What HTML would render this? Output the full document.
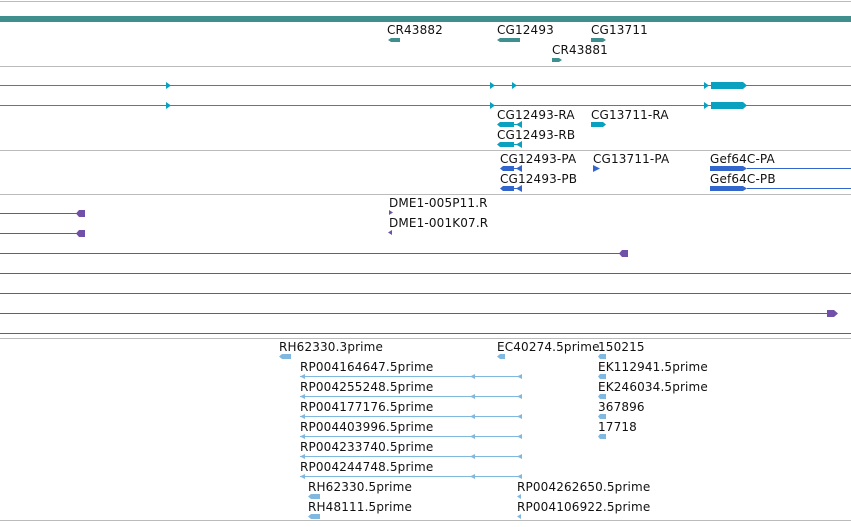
<!DOCTYPE html>
<html><head><meta charset="utf-8"><style>
html,body{margin:0;padding:0;background:#fff;}
svg text{font-family:"DejaVu Sans","Liberation Sans",sans-serif;font-size:12px;fill:#111;letter-spacing:0.15px;}
</style></head><body>
<svg width="851" height="522" xmlns="http://www.w3.org/2000/svg">
<g stroke="#bbb" stroke-width="1">
<line x1="0" y1="1.5" x2="851" y2="1.5"/><line x1="0" y1="66.5" x2="851" y2="66.5"/>
<line x1="0" y1="150.5" x2="851" y2="150.5"/><line x1="0" y1="194.5" x2="851" y2="194.5"/>
<line x1="0" y1="338.5" x2="851" y2="338.5"/><line x1="0" y1="520.5" x2="851" y2="520.5"/>
</g>
<rect x="0" y="16" width="851" height="6" fill="#3f8f8f"/>
<g fill="#3f8f8f">
<polygon points="391,38 400,38 400,42 391,42 388,40"/>
<polygon points="500,38 520,38 520,42 500,42 497,40"/>
<polygon points="591,38 603,38 606,40 603,42 591,42"/>
<polygon points="552,58 559,58 562,60 559,62 552,62"/>
</g>
<text x="387" y="34">CR43882</text><text x="497" y="34">CG12493</text><text x="591" y="34">CG13711</text><text x="552" y="54">CR43881</text>
<g stroke="#1497b5" stroke-width="1"><line x1="0" y1="85.5" x2="851" y2="85.5"/><line x1="0" y1="105.5" x2="851" y2="105.5"/></g>
<g fill="#0aa0bf">
<polygon points="166,82 171,85.5 166,89"/><polygon points="490,82 495,85.5 490,89"/><polygon points="512,82 517,85.5 512,89"/><polygon points="704,82 709,85.5 704,89"/>
<polygon points="711,82 743,82 747,85.5 743,89 711,89"/>
<polygon points="166,102 171,105.5 166,109"/><polygon points="490,102 495,105.5 490,109"/><polygon points="704,102 709,105.5 704,109"/>
<polygon points="711,102 743,102 747,105.5 743,109 711,109"/>
<polygon points="500,122 514,122 514,127 500,127 497,124.5"/><polygon points="516,124.5 522,121 522,128"/><rect x="513" y="124" width="4" height="1"/>
<polygon points="591,122 603,122 606,124.5 603,127 591,127"/>
<polygon points="500,142 514,142 514,147 500,147 497,144.5"/><polygon points="516,144.5 522,141 522,148"/><rect x="513" y="144" width="4" height="1"/>
</g>
<text x="497" y="119">CG12493-RA</text><text x="591" y="119">CG13711-RA</text><text x="497" y="139">CG12493-RB</text>
<g fill="#3366cc">
<polygon points="503,166 514,166 514,171 503,171 500,168.5"/><polygon points="516,168.5 522,165 522,172"/><rect x="513" y="168" width="4" height="1"/>
<polygon points="503,186 514,186 514,191 503,191 500,188.5"/><polygon points="516,188.5 522,185 522,192"/><rect x="513" y="188" width="4" height="1"/>
<polygon points="593,165 600,168.5 593,172"/>
<polygon points="710,166 743,166 747,168.5 743,171 710,171"/><rect x="747" y="168" width="104" height="1"/>
<polygon points="710,186 743,186 747,188.5 743,191 710,191"/><rect x="747" y="188" width="104" height="1"/>
</g>
<text x="500" y="163">CG12493-PA</text><text x="593" y="163">CG13711-PA</text><text x="710" y="163">Gef64C-PA</text>
<text x="500" y="183">CG12493-PB</text><text x="710" y="183">Gef64C-PB</text>
<g stroke="#6a55a0" stroke-width="1">
<line x1="0" y1="213.5" x2="80" y2="213.5"/><line x1="0" y1="233.5" x2="80" y2="233.5"/>
<line x1="0" y1="253.5" x2="622" y2="253.5"/><line x1="0" y1="273.5" x2="851" y2="273.5"/>
<line x1="0" y1="293.5" x2="851" y2="293.5"/><line x1="0" y1="313.5" x2="830" y2="313.5"/>
<line x1="0" y1="333.5" x2="851" y2="333.5"/>
</g>
<g fill="#7050a8">
<polygon points="79,210 85,210 85,217 79,217 76,213.5"/><polygon points="79,230 85,230 85,237 79,237 76,233.5"/>
<polygon points="622,250 628,250 628,257 622,257 619,253.5"/>
<polygon points="827,310 834,310 838,313.5 834,317 827,317"/>
<polygon points="389,210 393,212.5 389,215"/><polygon points="392,230 388,232.5 392,235"/>
</g>
<text x="389" y="207">DME1-005P11.R</text><text x="389" y="227">DME1-001K07.R</text>
<g fill="#80b8e0">
<polygon points="282,354 291,354 291,359 282,359 279,356.5"/>
<polygon points="500,354 505,354 505,359 500,359 497,356.5"/>
<polygon points="600,354 606,354 606,359 600,359 598,356.5"/>
<polygon points="600,374 606,374 606,379 600,379 598,376.5"/>
<polygon points="600,394 606,394 606,399 600,399 598,396.5"/>
<polygon points="600,414 606,414 606,419 600,419 598,416.5"/>
<polygon points="600,434 606,434 606,439 600,439 598,436.5"/>
<polygon points="311,494 320,494 320,499 311,499 308,496.5"/>
<polygon points="311,514 320,514 320,519 311,519 308,516.5"/>
<polygon points="517,496.5 521,494 521,499"/><polygon points="517,516.5 521,514 521,519"/>
<rect x="300" y="376" width="221" height="1"/><polygon points="300,376.5 305,374 305,379"/><polygon points="470,376.5 475,374 475,379"/><polygon points="517,376.5 522,374 522,379"/>
<rect x="300" y="396" width="221" height="1"/><polygon points="300,396.5 305,394 305,399"/><polygon points="470,396.5 475,394 475,399"/><polygon points="517,396.5 522,394 522,399"/>
<rect x="300" y="416" width="221" height="1"/><polygon points="300,416.5 305,414 305,419"/><polygon points="470,416.5 475,414 475,419"/><polygon points="517,416.5 522,414 522,419"/>
<rect x="300" y="436" width="221" height="1"/><polygon points="300,436.5 305,434 305,439"/><polygon points="470,436.5 475,434 475,439"/><polygon points="517,436.5 522,434 522,439"/>
<rect x="300" y="456" width="221" height="1"/><polygon points="300,456.5 305,454 305,459"/><polygon points="470,456.5 475,454 475,459"/><polygon points="517,456.5 522,454 522,459"/>
<rect x="300" y="476" width="221" height="1"/><polygon points="300,476.5 305,474 305,479"/><polygon points="470,476.5 475,474 475,479"/><polygon points="517,476.5 522,474 522,479"/>
</g>
<text x="279" y="351">RH62330.3prime</text><text x="497" y="351">EC40274.5prime</text><text x="598" y="351">150215</text>
<text x="300" y="371">RP004164647.5prime</text><text x="598" y="371">EK112941.5prime</text>
<text x="300" y="391">RP004255248.5prime</text><text x="598" y="391">EK246034.5prime</text>
<text x="300" y="411">RP004177176.5prime</text><text x="598" y="411">367896</text>
<text x="300" y="431">RP004403996.5prime</text><text x="598" y="431">17718</text>
<text x="300" y="451">RP004233740.5prime</text>
<text x="300" y="471">RP004244748.5prime</text>
<text x="308" y="491">RH62330.5prime</text><text x="517" y="491">RP004262650.5prime</text>
<text x="308" y="511">RH48111.5prime</text><text x="517" y="511">RP004106922.5prime</text>
</svg>
</body></html>
